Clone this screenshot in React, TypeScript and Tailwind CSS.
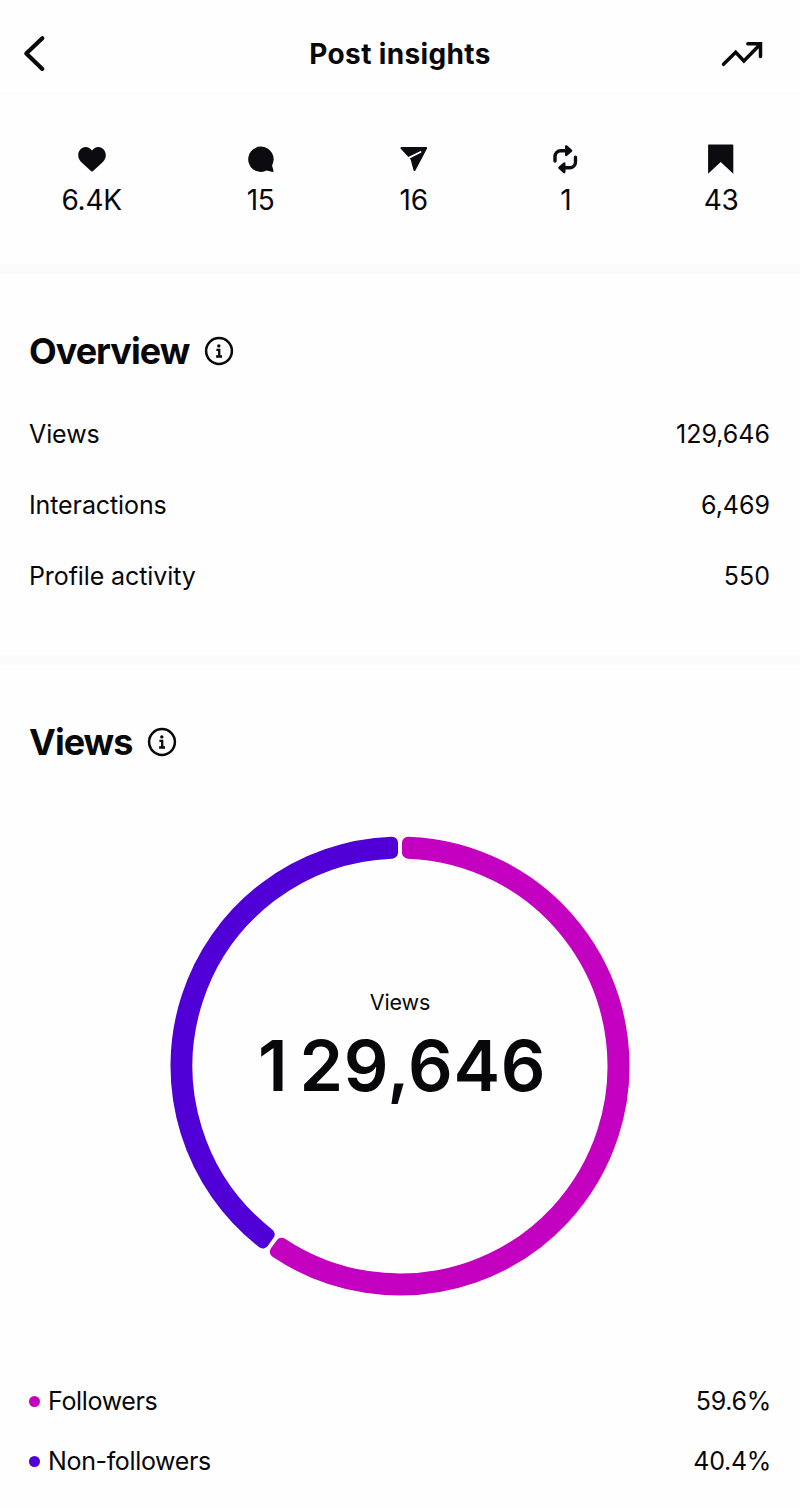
import type { ReactNode } from 'react';
import { clsx } from 'clsx';

const MAGENTA = '#c400c0';
const INDIGO = '#5000d6';

const stats = [
  {
    value: '6.4K',
    icon: (
      <svg width="28" height="28" viewBox="0 0 28 28" fill="#0c0b10">
        <path d="M14 26.4C13.4 26.4 13 26 12.4 25.4L4.2 18C1.6 15.6.2 13.2.2 10.2.2 5.6 3.4 1.9 7.6 1.9c2.7 0 5 1.4 6.4 3.7 1.4-2.3 3.7-3.7 6.4-3.7 4.2 0 7.4 3.7 7.4 8.3 0 3-1.4 5.4-4 7.8l-8.2 7.4c-.6.6-1 1-1.6 1z" />
      </svg>
    ),
  },
  {
    value: '15',
    icon: (
      <svg width="28" height="28" viewBox="0 0 28 28" fill="#0c0b10">
        <path d="M13.8 1.6A12.7 12.7 0 1 0 19.7 25.6l5.8 1.5c.7.1 1.1-.3 1-1L25.1 20.4A12.7 12.7 0 0 0 13.8 1.6z" />
      </svg>
    ),
  },
  {
    value: '16',
    icon: (
      <svg width="28" height="28" viewBox="0 0 28 28" fill="#0c0b10">
        <path
          d="M1.5 3.1H26.2L14.5 25 11.6 14.2z"
          stroke="#0c0b10"
          strokeWidth="2"
          strokeLinejoin="round"
        />
        <path d="M8.2 13.2L20.5 7" stroke="#fefefe" strokeWidth="1.9" strokeLinecap="round" />
      </svg>
    ),
  },
  {
    value: '1',
    icon: (
      <svg className="overflow-visible" width="26" height="28" viewBox="0 0 26 28" fill="none">
        <path
          d="M2 16V11.5A5.8 5.8 0 0 1 7.8 5.7H14M22.5 12.3V17a5.8 5.8 0 0 1-5.8 5.8H11.5"
          stroke="#0c0b10"
          strokeWidth="3.4"
          strokeLinecap="round"
        />
        <path
          d="M13.3 1.5L18 5.7l-4.7 4.2zM11.2 18.6L6.5 22.8l4.7 4.2z"
          fill="#0c0b10"
          stroke="#0c0b10"
          strokeWidth="2.6"
          strokeLinejoin="round"
        />
      </svg>
    ),
  },
  {
    value: '43',
    icon: (
      <svg className="overflow-visible" width="28" height="28" viewBox="0 0 28 28" fill="#0c0b10">
        <path d="M1.7-.4h24q.6 0 .6.6v28.6L13.7 17.1 1.1 28.8V.2q0-.6.6-.6z" />
      </svg>
    ),
  },
];

const overview = [
  { label: 'Views', value: '129,646' },
  { label: 'Interactions', value: '6,469' },
  { label: 'Profile activity', value: '550' },
];

const audience = [
  { label: 'Followers', value: '59.6%', dot: 'bg-[#c400c0]' },
  { label: 'Non-followers', value: '40.4%', dot: 'bg-[#5000d6]' },
];

const point = (r: number, angle: number) =>
  `${230 + r * Math.sin(angle)} ${230 - r * Math.cos(angle)}`;

// Ring segment; the round-joined stroke softens the corners
const segment = (from: number, to: number) => {
  const outer = 223.5;
  const inner = 213.5;
  const inset = 8;
  const a = (from * Math.PI) / 180;
  const b = (to * Math.PI) / 180;
  const large = to - from > 180 ? 1 : 0;
  return [
    `M${point(outer, a + inset / outer)}`,
    `A${outer} ${outer} 0 ${large} 1 ${point(outer, b - inset / outer)}`,
    `L${point(inner, b - inset / inner)}`,
    `A${inner} ${inner} 0 ${large} 0 ${point(inner, a + inset / inner)}Z`,
  ].join('');
};

const InfoIcon = () => (
  <svg width="30" height="30" viewBox="0 0 30 30" fill="none" stroke="#08080b">
    <circle cx="15" cy="15" r="12.9" strokeWidth="2.5" />
    <circle cx="14.8" cy="9.9" r="1.7" fill="#08080b" stroke="none" />
    <path d="M12.4 13.8h2.8v6.6M12.1 20.5h5.9" strokeWidth="2.3" />
  </svg>
);

const SectionTitle = ({ children }: { children: ReactNode }) => (
  <div className="flex items-center gap-[15px] h-11">
    <h2 className="text-[36px] leading-11 font-bold tracking-[-1px]">{children}</h2>
    <InfoIcon />
  </div>
);

const Divider = () => <div className="h-[10px] bg-[#faf9fc]" />;

export default function App() {
  return (
    <main
      className={clsx(
        'flex flex-col w-[800px] h-[1508px] overflow-hidden',
        'bg-[#fefefe] text-[#08080b] font-["Inter",sans-serif]',
      )}
    >
      <header className="flex items-center justify-between h-[94px] px-[20px] pt-[14px] border-b border-[#fbfafc]">
        <svg width="60" height="40" viewBox="0 0 60 40" fill="none" stroke="#08080b">
          <path
            d="M22.3 4.3L6.3 19.6l16 15.3"
            strokeWidth="4.2"
            strokeLinecap="round"
            strokeLinejoin="round"
          />
        </svg>
        <h1 className="text-[28px] leading-9 font-bold tracking-[0.35px]">Post insights</h1>
        <svg width="60" height="40" viewBox="0 0 60 40" fill="none" stroke="#08080b">
          <path
            d="M3.5 30.3L15.7 18.3l8.2 8.6L40 10.5M27.8 9.8h12.7v12.7"
            strokeWidth="3.5"
            strokeLinecap="round"
            strokeLinejoin="miter"
          />
        </svg>
      </header>

      <section className="flex justify-between px-[61.5px] pt-[51px] h-[170px]">
        {stats.map(({ value, icon }) => (
          <div key={value} className="flex flex-col items-center gap-2">
            {icon}
            <span className="text-[28px] leading-[38px] tracking-[-0.3px]">{value}</span>
          </div>
        ))}
      </section>

      <Divider />

      <section className="h-[381px] pt-[55px] pl-[29px] pr-[30px]">
        <SectionTitle>Overview</SectionTitle>
        <div className="flex flex-col pt-[26px]">
          {overview.map(({ label, value }) => (
            <div key={label} className="flex items-center justify-between h-[71px] text-[25px]">
              <span className="tracking-[-0.1px]">{label}</span>
              <span>{value}</span>
            </div>
          ))}
        </div>
      </section>

      <Divider />

      <section className="pt-[55px] pl-[29px] pr-[30px]">
        <SectionTitle>Views</SectionTitle>
        <div className="grid place-items-center pt-[71.5px] pl-px">
          <svg className="col-start-1 row-start-1" width="460" height="460" viewBox="0 0 460 460">
            <path
              d={segment(0, 215.8)}
              fill={MAGENTA}
              stroke={MAGENTA}
              strokeWidth="12"
              strokeLinejoin="round"
            />
            <path
              d={segment(215.8, 360)}
              fill={INDIGO}
              stroke={INDIGO}
              strokeWidth="12"
              strokeLinejoin="round"
            />
          </svg>
          <div className="col-start-1 row-start-1 flex flex-col items-center pb-[30px]">
            <span className="text-[21.5px] leading-[31px] tracking-[-0.1px]">Views</span>
            <span className="pl-[4px] text-[70px] leading-[96px] font-semibold tracking-[0.6px]">
              <span className="tracking-[12px]">1</span>29,646
            </span>
          </div>
        </div>
        <div className="flex flex-col pt-[76.5px]">
          {audience.map(({ label, value, dot }) => (
            <div key={label} className="flex items-center justify-between h-[60px] text-[25px]">
              <div className="flex items-center gap-[8px]">
                <span className={clsx('size-[11px] rounded-full mb-[2px]', dot)} />
                <span className="tracking-[-0.35px]">{label}</span>
              </div>
              <span className="-mr-px tracking-[-0.3px]">{value}</span>
            </div>
          ))}
        </div>
      </section>
    </main>
  );
}
